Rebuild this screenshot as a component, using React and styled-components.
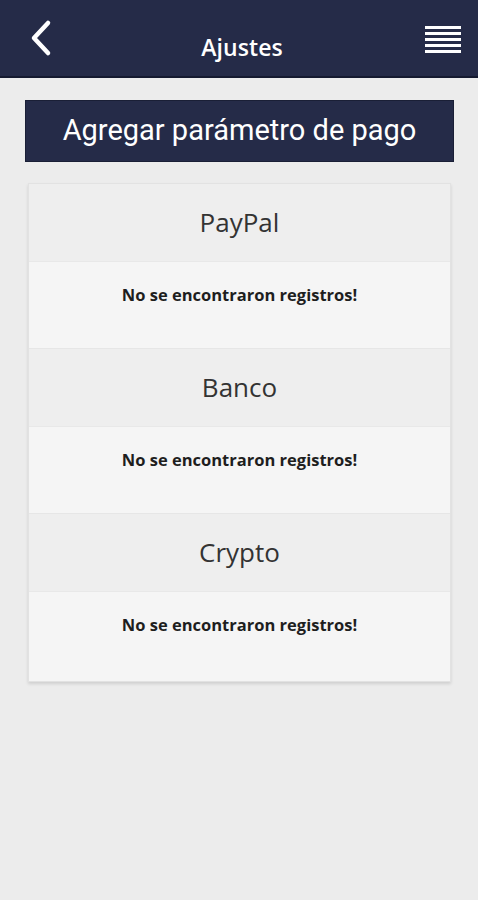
import React from "react";
import styled, { createGlobalStyle } from "styled-components";

const GlobalStyle = createGlobalStyle`
  html, body {
    margin: 0;
    padding: 0;
    background: #ececec;
    font-family: "Open Sans", "Liberation Sans", sans-serif;
  }
`;

const Page = styled.div`
  width: 478px;
  min-height: 900px;
  background: #ececec;
`;

const TopBar = styled.header`
  height: 78px;
  background: #252b48;
  border-bottom: 2px solid #151a30;
  display: flex;
  align-items: center;
  justify-content: space-between;
  padding: 0 16px 0 22px;
  box-sizing: border-box;
`;

const IconButton = styled.button`
  background: none;
  border: none;
  padding: 0;
  width: 38px;
  height: 40px;
  display: flex;
  align-items: center;
  justify-content: center;
  cursor: pointer;
`;

const Title = styled.h1`
  margin: 18px 0 0;
  font-size: 23px;
  font-weight: 600;
  color: #ffffff;
  letter-spacing: 0.1px;
`;

const Content = styled.main`
  padding: 22px 24px 0 25px;
  display: flex;
  flex-direction: column;
  gap: 21px;
`;

const AddButton = styled.button`
  height: 62px;
  width: 100%;
  background: #252b48;
  border: 1px solid #1a1f36;
  color: #ffffff;
  font-family: Roboto, "Liberation Sans", sans-serif;
  font-size: 29px;
  font-weight: 400;
  cursor: pointer;
  padding: 0 0 2px;
`;

const Card = styled.section`
  margin: 0 3px;
  background: #f5f5f5;
  border: 1px solid #e2e2e2;
  box-shadow: 0 2px 3px rgba(0, 0, 0, 0.12);
`;

const Group = styled.div`
  & + & {
    border-top: 1px solid #e6e6e6;
  }
`;

const GroupHeader = styled.div`
  height: 78px;
  background: #eeeeee;
  border-bottom: 1px solid #e8e8e8;
  display: flex;
  align-items: center;
  justify-content: center;
  font-size: 26px;
  color: #333333;
  padding-bottom: 2px;
  box-sizing: border-box;
`;

const GroupBody = styled.div`
  height: ${p => (p.$last ? 89 : 86)}px;
  background: #f5f5f5;
  padding-top: 21px;
  box-sizing: border-box;
  text-align: center;
  font-size: 16.5px;
  font-weight: 700;
  color: #1e1e1e;
`;

const methods = ["PayPal", "Banco", "Crypto"];

export default function App() {
  return (
    <Page>
      <GlobalStyle />
      <TopBar>
        <IconButton aria-label="Atrás">
          <svg width="26" height="38" viewBox="0 0 26 38">
            <path
              d="M20 4 L6 19 L20 34"
              fill="none"
              stroke="#ffffff"
              strokeWidth="4.5"
              strokeLinecap="round"
              strokeLinejoin="round"
            />
          </svg>
        </IconButton>
        <Title>Ajustes</Title>
        <IconButton aria-label="Menú">
          <svg width="36" height="32" viewBox="0 0 36 32">
            {[4, 10, 16, 22, 28].map(y => (
              <rect key={y} x="0" y={y} width="36" height="3" fill="#ffffff" />
            ))}
          </svg>
        </IconButton>
      </TopBar>
      <Content>
        <AddButton>Agregar parámetro de pago</AddButton>
        <Card>
          {methods.map((name, i) => (
            <Group key={name}>
              <GroupHeader>{name}</GroupHeader>
              <GroupBody $last={i === methods.length - 1}>
                No se encontraron registros!
              </GroupBody>
            </Group>
          ))}
        </Card>
      </Content>
    </Page>
  );
}
